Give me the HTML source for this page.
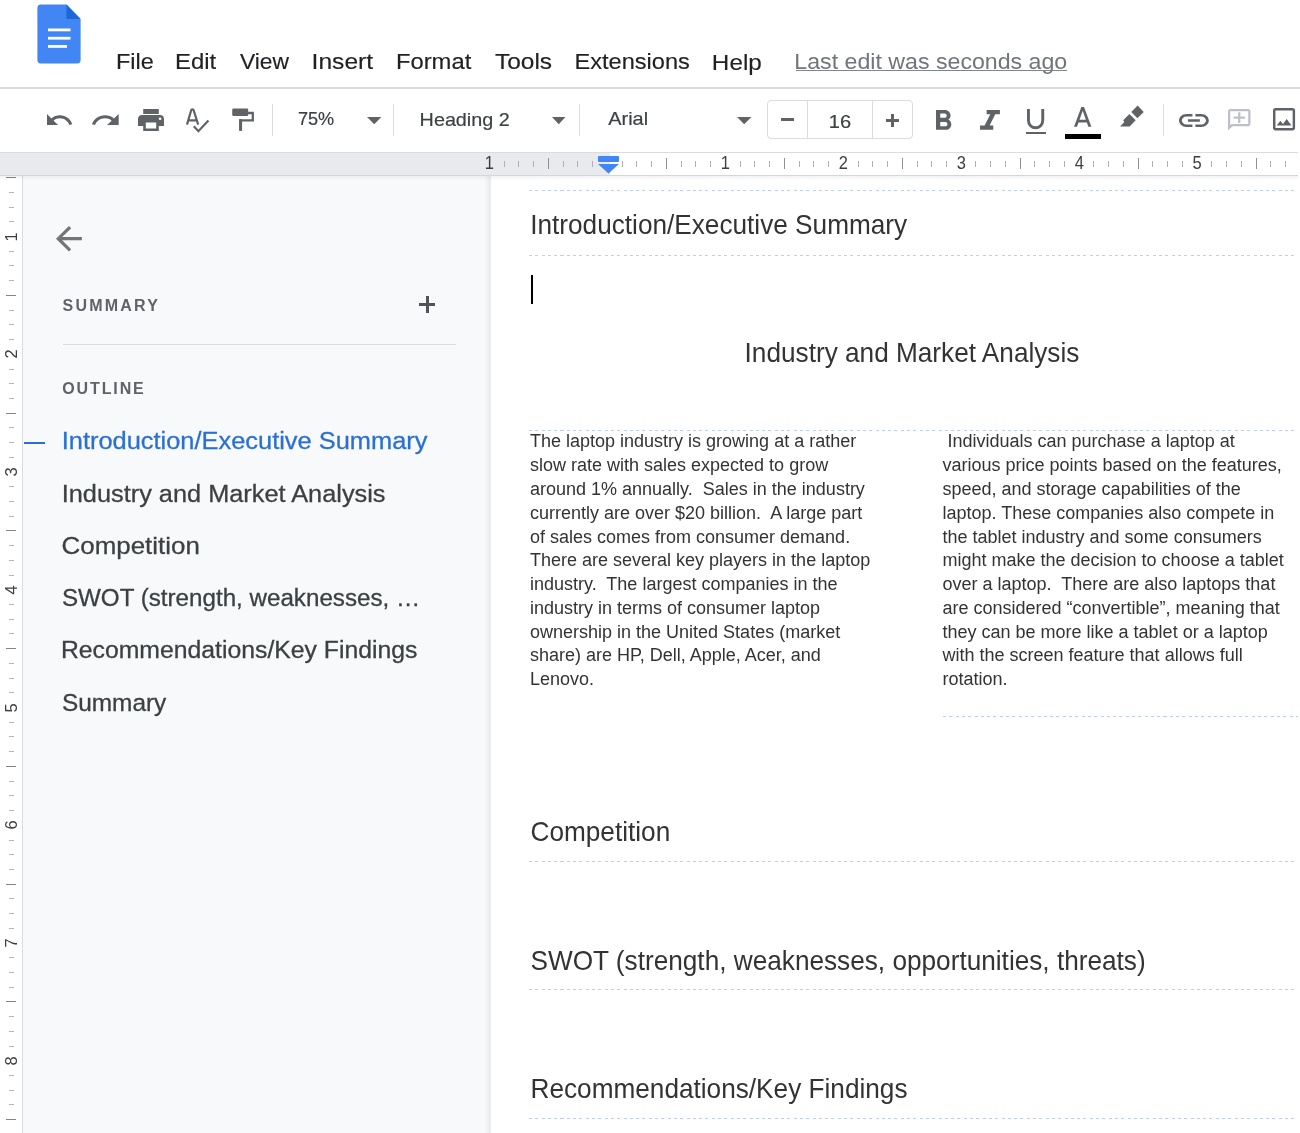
<!DOCTYPE html>
<html><head><meta charset="utf-8"><style>
html,body{margin:0;padding:0;width:1300px;height:1133px;overflow:hidden;background:#fff}
body{position:relative;font-family:"Liberation Sans",sans-serif}
.t{position:absolute;white-space:pre;font-family:"Liberation Sans",sans-serif}
.r{position:absolute;box-sizing:border-box}
.ic{position:absolute;overflow:visible}
</style></head><body><div id="root" style="position:absolute;left:0;top:0;width:1300px;height:1133px;will-change:transform;background:#fff">
<svg class="ic" style="left:37px;top:4px;width:44px;height:60px" viewBox="0 0 44 60">
<path d="M4 0.6 H29.5 L43.6 15 V56 Q43.6 59.6 40 59.6 H4 Q0.4 59.6 0.4 56 V4 Q0.4 0.6 4 0.6Z" fill="#4285f4"/>
<path d="M29.5 0.6 L43.6 15 H29.5Z" fill="#1f66d6"/>
<rect x="11" y="24.5" width="22.5" height="2.8" fill="#fff"/>
<rect x="11" y="32.8" width="22.5" height="2.8" fill="#fff"/>
<rect x="11" y="41" width="19" height="2.8" fill="#fff"/>
</svg>
<div class="t" style="left:115.92px;top:47.28px;font-size:23.476px;line-height:28.17px;color:#202124;font-weight:normal;transform:scaleY(0.9260);transform-origin:0 22.22px;-webkit-text-stroke:0.15px #202124">File</div>
<div class="t" style="left:174.98px;top:46.83px;font-size:23.947px;line-height:28.74px;color:#202124;font-weight:normal;transform:scaleY(0.9078);transform-origin:0 22.67px;-webkit-text-stroke:0.15px #202124">Edit</div>
<div class="t" style="left:240.00px;top:47.91px;font-size:22.807px;line-height:27.37px;color:#202124;font-weight:normal;transform:scaleY(0.9532);transform-origin:0 21.59px;-webkit-text-stroke:0.15px #202124">View</div>
<div class="t" style="left:311.58px;top:46.20px;font-size:24.615px;line-height:29.54px;color:#202124;font-weight:normal;transform:scaleY(0.8832);transform-origin:0 23.30px;-webkit-text-stroke:0.15px #202124">Insert</div>
<div class="t" style="left:395.89px;top:46.94px;font-size:23.825px;line-height:28.59px;color:#202124;font-weight:normal;transform:scaleY(0.9124);transform-origin:0 22.56px;-webkit-text-stroke:0.15px #202124">Format</div>
<div class="t" style="left:494.91px;top:46.29px;font-size:24.513px;line-height:29.42px;color:#202124;font-weight:normal;transform:scaleY(0.8868);transform-origin:0 23.21px;-webkit-text-stroke:0.15px #202124">Tools</div>
<div class="t" style="left:574.41px;top:47.15px;font-size:23.611px;line-height:28.33px;color:#202124;font-weight:normal;transform:scaleY(0.9207);transform-origin:0 22.35px;-webkit-text-stroke:0.15px #202124">Extensions</div>
<div class="t" style="left:711.86px;top:46.52px;font-size:24.272px;line-height:29.13px;color:#202124;font-weight:normal;transform:scaleY(0.8956);transform-origin:0 22.98px;-webkit-text-stroke:0.15px #202124">Help</div>
<div class="t" style="left:794.35px;top:48.46px;font-size:23.173px;line-height:27.81px;color:#70757a;font-weight:normal;transform:scaleY(0.9381);transform-origin:0 21.94px;-webkit-text-stroke:0px #70757a">Last edit was seconds ago</div>
<div class="r" style="left:796px;top:69.6px;width:271px;height:1.3px;background:#80868b"></div>
<div class="r" style="left:0;top:87px;width:1300px;height:1.5px;background:#dadce0"></div>
<svg class="ic" style="left:46.6px;top:113.5px;width:25.300000000000004px;height:11.099999999999994px" viewBox="2 7 20.5 9" preserveAspectRatio="none"><path fill="#5f6368" d="M12.5 8c-2.65 0-5.05.99-6.9 2.6L2 7v9h9l-3.62-3.62c1.39-1.16 3.16-1.88 5.12-1.88 3.54 0 6.55 2.31 7.6 5.5l2.37-.78C21.08 11.03 17.15 8 12.5 8z" /></svg>
<svg class="ic" style="left:92.3px;top:113.5px;width:26.700000000000003px;height:11.099999999999994px" viewBox="1.54 7 20.46 9" preserveAspectRatio="none"><path fill="#5f6368" d="M18.4 10.6C16.55 8.99 14.15 8 11.5 8c-4.650 0-8.58 3.03-9.96 7.22L3.9 16c1.05-3.19 4.05-5.5 7.6-5.5 1.95 0 3.73.72 5.12 1.88L13 16h9V7l-3.6 3.6z" /></svg>
<svg class="ic" style="left:138px;top:108.5px;width:26px;height:22.0px" viewBox="2 3 20 18" preserveAspectRatio="none"><path fill="#5f6368" d="M19 8H5c-1.66 0-3 1.34-3 3v6h4v4h12v-4h4v-6c0-1.66-1.34-3-3-3zm-3 11H8v-5h8v5zm3-7c-.55 0-1-.45-1-1s.45-1 1-1 1 .45 1 1-.45 1-1 1zm-1-9H6v4h12V3z" /></svg>
<svg class="ic" style="left:175px;top:100px;width:40px;height:40px" viewBox="175 100 40 40"><path d="M187 124.6 L191.2 110.2 Q192.4 108.6 193.6 110.2 L198.2 124.6 M188.6 120.3 H196.6" stroke="#5f6368" stroke-width="2.2" fill="none" stroke-linejoin="round"/><path d="M193.8 126.3 L198.4 131.2 L208.4 120.6" stroke="#5f6368" stroke-width="2.2" fill="none"/></svg>
<svg class="ic" style="left:225px;top:100px;width:40px;height:40px" viewBox="225 100 40 40"><rect x="232.2" y="108.5" width="16" height="7.4" rx="1.2" fill="#5f6368"/><path d="M248 113 H252.8 V120.3 H240.6 V130.7" stroke="#5f6368" stroke-width="2.3" fill="none"/><rect x="239.1" y="119.2" width="3" height="11.5" fill="#5f6368"/></svg>
<div class="r" style="left:271.8px;top:104px;width:1px;height:32px;background:#dadce0"></div>
<div class="r" style="left:393.0px;top:104px;width:1px;height:32px;background:#dadce0"></div>
<div class="r" style="left:578.7px;top:104px;width:1px;height:32px;background:#dadce0"></div>
<div class="r" style="left:1163.3px;top:104px;width:1px;height:32px;background:#dadce0"></div>
<svg class="ic" style="left:366.5px;top:117.3px;width:14.399999999999977px;height:7.200000000000003px" viewBox="7 10 10 5" preserveAspectRatio="none"><path fill="#5f6368" d="M7 10l5 5 5-5z" /></svg>
<svg class="ic" style="left:551.5px;top:117.3px;width:13.5px;height:7.200000000000003px" viewBox="7 10 10 5" preserveAspectRatio="none"><path fill="#5f6368" d="M7 10l5 5 5-5z" /></svg>
<svg class="ic" style="left:737.4px;top:117.3px;width:14.399999999999977px;height:7.200000000000003px" viewBox="7 10 10 5" preserveAspectRatio="none"><path fill="#5f6368" d="M7 10l5 5 5-5z" /></svg>
<div class="t" style="left:297.89px;top:109.06px;font-size:18.103px;line-height:21.72px;color:#3c4043;font-weight:normal;transform:scaleY(1.0087);transform-origin:0 17.14px;-webkit-text-stroke:0.2px #3c4043">75%</div>
<div class="t" style="left:419.62px;top:107.57px;font-size:19.784px;line-height:23.74px;color:#3c4043;font-weight:normal;transform:scaleY(0.9230);transform-origin:0 18.73px;-webkit-text-stroke:0.2px #3c4043">Heading 2</div>
<div class="t" style="left:608.20px;top:107.40px;font-size:19.966px;line-height:23.96px;color:#3c4043;font-weight:normal;transform:scaleY(0.9146);transform-origin:0 18.90px;-webkit-text-stroke:0.2px #3c4043">Arial</div>
<div class="r" style="left:767.3px;top:99.8px;width:145.6px;height:39px;border:1px solid #dadce0;border-radius:4px"></div>
<div class="r" style="left:806.5px;top:100px;width:1px;height:38.6px;background:#dadce0"></div>
<div class="r" style="left:872px;top:100px;width:1px;height:38.6px;background:#dadce0"></div>
<div class="r" style="left:781px;top:118px;width:13.2px;height:3px;background:#5f6368"></div>
<div class="r" style="left:886px;top:119px;width:13.4px;height:2.9px;background:#5f6368"></div>
<div class="r" style="left:891.25px;top:113.8px;width:2.9px;height:13.3px;background:#5f6368"></div>
<div class="t" style="left:828.79px;top:108.69px;font-size:20.076px;line-height:24.09px;color:#3c4043;font-weight:normal;transform:scaleY(0.9096);transform-origin:0 19.01px;-webkit-text-stroke:0.2px #3c4043">16</div>
<svg class="ic" style="left:935.9px;top:110px;width:15.300000000000068px;height:19.80000000000001px" viewBox="7 4 10.75 14" preserveAspectRatio="none"><path fill="#5f6368" d="M15.6 10.79c.97-.67 1.65-1.77 1.65-2.79 0-2.26-1.75-4-4-4H7v14h7.04c2.09 0 3.710-1.7 3.71-3.79 0-1.52-.86-2.82-2.15-3.42zM10 6.5h3c.83 0 1.5.67 1.5 1.5s-.67 1.5-1.5 1.5h-3v-3zm3.5 9H10v-3h3.5c.83 0 1.5.67 1.5 1.5s-.67 1.5-1.5 1.5z" /></svg>
<svg class="ic" style="left:980.3px;top:110px;width:19.90000000000009px;height:19.80000000000001px" viewBox="6 4 12 14" preserveAspectRatio="none"><path fill="#5f6368" d="M10 4v3h2.21l-3.42 8H6v3h8v-3h-2.21l3.42-8H18V4z" /></svg>
<svg class="ic" style="left:1027.2px;top:109.3px;width:17.2px;height:20px" viewBox="0 0 17.2 20"><path d="M1.45 0 V11.6 A7.15 7.15 0 0 0 15.75 11.6 V0" stroke="#5f6368" stroke-width="2.9" fill="none"/></svg>
<div class="r" style="left:1026px;top:131.6px;width:20px;height:2.8px;background:#5f6368"></div>
<svg class="ic" style="left:1073.6px;top:106.9px;width:17.40000000000009px;height:19.799999999999997px" viewBox="5.5 2 13 14" preserveAspectRatio="none"><path fill="#5f6368" d="M11 2L5.5 16h2.25l1.12-3h6.25l1.12 3h2.25L13 2h-2zm-1.38 9L12 4.67 14.38 11H9.62z" /></svg>
<div class="r" style="left:1064.5px;top:133.8px;width:36.7px;height:5px;background:#000"></div>
<svg class="ic" style="left:1110px;top:100px;width:40px;height:32px" viewBox="1110 100 40 32"><path fill="#5f6368" d="M1137.6 105.6 L1143.8 111.9 L1137.4 118.2 L1131.3 112.1Z M1129.4 114.1 L1135.7 120.3 L1129.6 126.4 L1120.1 126.5 L1124.3 122.1 L1123.2 120.3Z"/></svg>
<svg class="ic" style="left:1179.2px;top:113.6px;width:29.799999999999955px;height:12.900000000000006px" viewBox="2 7 20 10" preserveAspectRatio="none"><path fill="#5f6368" d="M3.9 12c0-1.71 1.39-3.1 3.1-3.1h4V7H7c-2.76 0-5 2.24-5 5s2.24 5 5 5h4v-1.9H7c-1.71 0-3.1-1.39-3.1-3.1zM8 13h8v-2H8v2zm9-6h-4v1.9h4c1.71 0 3.1 1.39 3.1 3.1s-1.39 3.1-3.1 3.1h-4V17h4c2.76 0 5-2.24 5-5s-2.24-5-5-5z" /></svg>
<svg class="ic" style="left:1228px;top:108.8px;width:22.5px;height:21.500000000000014px" viewBox="2 2 20 20" preserveAspectRatio="none"><path fill="#bdc1c6" d="M22 4c0-1.1-.9-2-2-2H4c-1.1 0-1.99.9-1.99 2L2 22l4-4h14c1.1 0 2-.9 2-2V4zm-2 12H5.17L4 17.17V4h16v12zM11 5h2v4h4v2h-4v4h-2v-4H7V9h4z" /></svg>
<svg class="ic" style="left:1272.5px;top:107.9px;width:22.09999999999991px;height:22.599999999999994px" viewBox="3 3 18 18" preserveAspectRatio="none"><path fill="#5f6368" d="M19 5v14H5V5h14m0-2H5c-1.1 0-2 .9-2 2v14c0 1.1.9 2 2 2h14c1.1 0 2-.9 2-2V5c0-1.1-.9-2-2-2zm-4.86 8.86l-3 3.87L9 13.14 6 17h12l-3.86-5.14z" /></svg>
<div class="r" style="left:0;top:151.5px;width:1300px;height:1px;background:#dadce0"></div>
<div class="r" style="left:0;top:152.5px;width:1300px;height:22.5px;background:#e8eaed"></div>
<div class="r" style="left:610px;top:152.5px;width:690px;height:22.5px;background:#fff"></div>
<div class="r" style="left:0;top:174.5px;width:1300px;height:1.5px;background:#d3d6da"></div>
<div class="t" style="left:479.32px;top:153.3px;width:20px;text-align:center;font-size:16.5px;line-height:20px;color:#3c4043;transform:scaleY(1.08)">1</div>
<div class="r" style="left:503.57px;top:161px;width:1px;height:5.5px;background:#aeb2b6"></div>
<div class="r" style="left:518.31px;top:161px;width:1px;height:5.5px;background:#aeb2b6"></div>
<div class="r" style="left:533.06px;top:161px;width:1px;height:5.5px;background:#aeb2b6"></div>
<div class="r" style="left:547.81px;top:157.5px;width:1px;height:11.8px;background:#8d9196"></div>
<div class="r" style="left:562.56px;top:161px;width:1px;height:5.5px;background:#aeb2b6"></div>
<div class="r" style="left:577.30px;top:161px;width:1px;height:5.5px;background:#aeb2b6"></div>
<div class="r" style="left:592.05px;top:161px;width:1px;height:5.5px;background:#aeb2b6"></div>
<div class="r" style="left:621.55px;top:161px;width:1px;height:5.5px;background:#aeb2b6"></div>
<div class="r" style="left:636.29px;top:161px;width:1px;height:5.5px;background:#aeb2b6"></div>
<div class="r" style="left:651.04px;top:161px;width:1px;height:5.5px;background:#aeb2b6"></div>
<div class="r" style="left:665.79px;top:157.5px;width:1px;height:11.8px;background:#8d9196"></div>
<div class="r" style="left:680.54px;top:161px;width:1px;height:5.5px;background:#aeb2b6"></div>
<div class="r" style="left:695.28px;top:161px;width:1px;height:5.5px;background:#aeb2b6"></div>
<div class="r" style="left:710.03px;top:161px;width:1px;height:5.5px;background:#aeb2b6"></div>
<div class="t" style="left:715.28px;top:153.3px;width:20px;text-align:center;font-size:16.5px;line-height:20px;color:#3c4043;transform:scaleY(1.08)">1</div>
<div class="r" style="left:739.53px;top:161px;width:1px;height:5.5px;background:#aeb2b6"></div>
<div class="r" style="left:754.27px;top:161px;width:1px;height:5.5px;background:#aeb2b6"></div>
<div class="r" style="left:769.02px;top:161px;width:1px;height:5.5px;background:#aeb2b6"></div>
<div class="r" style="left:783.77px;top:157.5px;width:1px;height:11.8px;background:#8d9196"></div>
<div class="r" style="left:798.52px;top:161px;width:1px;height:5.5px;background:#aeb2b6"></div>
<div class="r" style="left:813.26px;top:161px;width:1px;height:5.5px;background:#aeb2b6"></div>
<div class="r" style="left:828.01px;top:161px;width:1px;height:5.5px;background:#aeb2b6"></div>
<div class="t" style="left:833.26px;top:153.3px;width:20px;text-align:center;font-size:16.5px;line-height:20px;color:#3c4043;transform:scaleY(1.08)">2</div>
<div class="r" style="left:857.51px;top:161px;width:1px;height:5.5px;background:#aeb2b6"></div>
<div class="r" style="left:872.25px;top:161px;width:1px;height:5.5px;background:#aeb2b6"></div>
<div class="r" style="left:887.00px;top:161px;width:1px;height:5.5px;background:#aeb2b6"></div>
<div class="r" style="left:901.75px;top:157.5px;width:1px;height:11.8px;background:#8d9196"></div>
<div class="r" style="left:916.50px;top:161px;width:1px;height:5.5px;background:#aeb2b6"></div>
<div class="r" style="left:931.24px;top:161px;width:1px;height:5.5px;background:#aeb2b6"></div>
<div class="r" style="left:945.99px;top:161px;width:1px;height:5.5px;background:#aeb2b6"></div>
<div class="t" style="left:951.24px;top:153.3px;width:20px;text-align:center;font-size:16.5px;line-height:20px;color:#3c4043;transform:scaleY(1.08)">3</div>
<div class="r" style="left:975.49px;top:161px;width:1px;height:5.5px;background:#aeb2b6"></div>
<div class="r" style="left:990.23px;top:161px;width:1px;height:5.5px;background:#aeb2b6"></div>
<div class="r" style="left:1004.98px;top:161px;width:1px;height:5.5px;background:#aeb2b6"></div>
<div class="r" style="left:1019.73px;top:157.5px;width:1px;height:11.8px;background:#8d9196"></div>
<div class="r" style="left:1034.48px;top:161px;width:1px;height:5.5px;background:#aeb2b6"></div>
<div class="r" style="left:1049.22px;top:161px;width:1px;height:5.5px;background:#aeb2b6"></div>
<div class="r" style="left:1063.97px;top:161px;width:1px;height:5.5px;background:#aeb2b6"></div>
<div class="t" style="left:1069.22px;top:153.3px;width:20px;text-align:center;font-size:16.5px;line-height:20px;color:#3c4043;transform:scaleY(1.08)">4</div>
<div class="r" style="left:1093.47px;top:161px;width:1px;height:5.5px;background:#aeb2b6"></div>
<div class="r" style="left:1108.21px;top:161px;width:1px;height:5.5px;background:#aeb2b6"></div>
<div class="r" style="left:1122.96px;top:161px;width:1px;height:5.5px;background:#aeb2b6"></div>
<div class="r" style="left:1137.71px;top:157.5px;width:1px;height:11.8px;background:#8d9196"></div>
<div class="r" style="left:1152.46px;top:161px;width:1px;height:5.5px;background:#aeb2b6"></div>
<div class="r" style="left:1167.20px;top:161px;width:1px;height:5.5px;background:#aeb2b6"></div>
<div class="r" style="left:1181.95px;top:161px;width:1px;height:5.5px;background:#aeb2b6"></div>
<div class="t" style="left:1187.20px;top:153.3px;width:20px;text-align:center;font-size:16.5px;line-height:20px;color:#3c4043;transform:scaleY(1.08)">5</div>
<div class="r" style="left:1211.45px;top:161px;width:1px;height:5.5px;background:#aeb2b6"></div>
<div class="r" style="left:1226.19px;top:161px;width:1px;height:5.5px;background:#aeb2b6"></div>
<div class="r" style="left:1240.94px;top:161px;width:1px;height:5.5px;background:#aeb2b6"></div>
<div class="r" style="left:1255.69px;top:157.5px;width:1px;height:11.8px;background:#8d9196"></div>
<div class="r" style="left:1270.44px;top:161px;width:1px;height:5.5px;background:#aeb2b6"></div>
<div class="r" style="left:1285.18px;top:161px;width:1px;height:5.5px;background:#aeb2b6"></div>
<div class="r" style="left:597.5px;top:155.6px;width:21px;height:6px;background:#4285f4;border-radius:1px"></div>
<svg class="ic" style="left:597.5px;top:163.5px;width:21px;height:9.5px" viewBox="0 0 21 9.5"><path d="M0 0H21L10.5 9.5Z" fill="#4285f4"/></svg>
<div class="r" style="left:0;top:176px;width:22px;height:957px;background:#fff"></div>
<div class="r" style="left:22px;top:176px;width:1px;height:957px;background:#dadce0"></div>
<div class="r" style="left:5.5px;top:177.18px;width:10.5px;height:1px;background:#80868b"></div>
<div class="r" style="left:8.5px;top:191.89px;width:5.5px;height:1px;background:#b4b8bc"></div>
<div class="r" style="left:8.5px;top:206.61px;width:5.5px;height:1px;background:#b4b8bc"></div>
<div class="r" style="left:8.5px;top:221.33px;width:5.5px;height:1px;background:#b4b8bc"></div>
<div class="t" style="left:1px;top:226.55px;width:20px;height:20px;text-align:center;font-size:16.5px;line-height:20px;color:#3c4043;transform:rotate(-90deg)">1</div>
<div class="r" style="left:8.5px;top:250.77px;width:5.5px;height:1px;background:#b4b8bc"></div>
<div class="r" style="left:8.5px;top:265.49px;width:5.5px;height:1px;background:#b4b8bc"></div>
<div class="r" style="left:8.5px;top:280.21px;width:5.5px;height:1px;background:#b4b8bc"></div>
<div class="r" style="left:5.5px;top:294.93px;width:10.5px;height:1px;background:#80868b"></div>
<div class="r" style="left:8.5px;top:309.64px;width:5.5px;height:1px;background:#b4b8bc"></div>
<div class="r" style="left:8.5px;top:324.36px;width:5.5px;height:1px;background:#b4b8bc"></div>
<div class="r" style="left:8.5px;top:339.08px;width:5.5px;height:1px;background:#b4b8bc"></div>
<div class="t" style="left:1px;top:344.30px;width:20px;height:20px;text-align:center;font-size:16.5px;line-height:20px;color:#3c4043;transform:rotate(-90deg)">2</div>
<div class="r" style="left:8.5px;top:368.52px;width:5.5px;height:1px;background:#b4b8bc"></div>
<div class="r" style="left:8.5px;top:383.24px;width:5.5px;height:1px;background:#b4b8bc"></div>
<div class="r" style="left:8.5px;top:397.96px;width:5.5px;height:1px;background:#b4b8bc"></div>
<div class="r" style="left:5.5px;top:412.68px;width:10.5px;height:1px;background:#80868b"></div>
<div class="r" style="left:8.5px;top:427.39px;width:5.5px;height:1px;background:#b4b8bc"></div>
<div class="r" style="left:8.5px;top:442.11px;width:5.5px;height:1px;background:#b4b8bc"></div>
<div class="r" style="left:8.5px;top:456.83px;width:5.5px;height:1px;background:#b4b8bc"></div>
<div class="t" style="left:1px;top:462.05px;width:20px;height:20px;text-align:center;font-size:16.5px;line-height:20px;color:#3c4043;transform:rotate(-90deg)">3</div>
<div class="r" style="left:8.5px;top:486.27px;width:5.5px;height:1px;background:#b4b8bc"></div>
<div class="r" style="left:8.5px;top:500.99px;width:5.5px;height:1px;background:#b4b8bc"></div>
<div class="r" style="left:8.5px;top:515.71px;width:5.5px;height:1px;background:#b4b8bc"></div>
<div class="r" style="left:5.5px;top:530.42px;width:10.5px;height:1px;background:#80868b"></div>
<div class="r" style="left:8.5px;top:545.14px;width:5.5px;height:1px;background:#b4b8bc"></div>
<div class="r" style="left:8.5px;top:559.86px;width:5.5px;height:1px;background:#b4b8bc"></div>
<div class="r" style="left:8.5px;top:574.58px;width:5.5px;height:1px;background:#b4b8bc"></div>
<div class="t" style="left:1px;top:579.80px;width:20px;height:20px;text-align:center;font-size:16.5px;line-height:20px;color:#3c4043;transform:rotate(-90deg)">4</div>
<div class="r" style="left:8.5px;top:604.02px;width:5.5px;height:1px;background:#b4b8bc"></div>
<div class="r" style="left:8.5px;top:618.74px;width:5.5px;height:1px;background:#b4b8bc"></div>
<div class="r" style="left:8.5px;top:633.46px;width:5.5px;height:1px;background:#b4b8bc"></div>
<div class="r" style="left:5.5px;top:648.17px;width:10.5px;height:1px;background:#80868b"></div>
<div class="r" style="left:8.5px;top:662.89px;width:5.5px;height:1px;background:#b4b8bc"></div>
<div class="r" style="left:8.5px;top:677.61px;width:5.5px;height:1px;background:#b4b8bc"></div>
<div class="r" style="left:8.5px;top:692.33px;width:5.5px;height:1px;background:#b4b8bc"></div>
<div class="t" style="left:1px;top:697.55px;width:20px;height:20px;text-align:center;font-size:16.5px;line-height:20px;color:#3c4043;transform:rotate(-90deg)">5</div>
<div class="r" style="left:8.5px;top:721.77px;width:5.5px;height:1px;background:#b4b8bc"></div>
<div class="r" style="left:8.5px;top:736.49px;width:5.5px;height:1px;background:#b4b8bc"></div>
<div class="r" style="left:8.5px;top:751.21px;width:5.5px;height:1px;background:#b4b8bc"></div>
<div class="r" style="left:5.5px;top:765.92px;width:10.5px;height:1px;background:#80868b"></div>
<div class="r" style="left:8.5px;top:780.64px;width:5.5px;height:1px;background:#b4b8bc"></div>
<div class="r" style="left:8.5px;top:795.36px;width:5.5px;height:1px;background:#b4b8bc"></div>
<div class="r" style="left:8.5px;top:810.08px;width:5.5px;height:1px;background:#b4b8bc"></div>
<div class="t" style="left:1px;top:815.30px;width:20px;height:20px;text-align:center;font-size:16.5px;line-height:20px;color:#3c4043;transform:rotate(-90deg)">6</div>
<div class="r" style="left:8.5px;top:839.52px;width:5.5px;height:1px;background:#b4b8bc"></div>
<div class="r" style="left:8.5px;top:854.24px;width:5.5px;height:1px;background:#b4b8bc"></div>
<div class="r" style="left:8.5px;top:868.96px;width:5.5px;height:1px;background:#b4b8bc"></div>
<div class="r" style="left:5.5px;top:883.67px;width:10.5px;height:1px;background:#80868b"></div>
<div class="r" style="left:8.5px;top:898.39px;width:5.5px;height:1px;background:#b4b8bc"></div>
<div class="r" style="left:8.5px;top:913.11px;width:5.5px;height:1px;background:#b4b8bc"></div>
<div class="r" style="left:8.5px;top:927.83px;width:5.5px;height:1px;background:#b4b8bc"></div>
<div class="t" style="left:1px;top:933.05px;width:20px;height:20px;text-align:center;font-size:16.5px;line-height:20px;color:#3c4043;transform:rotate(-90deg)">7</div>
<div class="r" style="left:8.5px;top:957.27px;width:5.5px;height:1px;background:#b4b8bc"></div>
<div class="r" style="left:8.5px;top:971.99px;width:5.5px;height:1px;background:#b4b8bc"></div>
<div class="r" style="left:8.5px;top:986.71px;width:5.5px;height:1px;background:#b4b8bc"></div>
<div class="r" style="left:5.5px;top:1001.42px;width:10.5px;height:1px;background:#80868b"></div>
<div class="r" style="left:8.5px;top:1016.14px;width:5.5px;height:1px;background:#b4b8bc"></div>
<div class="r" style="left:8.5px;top:1030.86px;width:5.5px;height:1px;background:#b4b8bc"></div>
<div class="r" style="left:8.5px;top:1045.58px;width:5.5px;height:1px;background:#b4b8bc"></div>
<div class="t" style="left:1px;top:1050.80px;width:20px;height:20px;text-align:center;font-size:16.5px;line-height:20px;color:#3c4043;transform:rotate(-90deg)">8</div>
<div class="r" style="left:8.5px;top:1075.02px;width:5.5px;height:1px;background:#b4b8bc"></div>
<div class="r" style="left:8.5px;top:1089.74px;width:5.5px;height:1px;background:#b4b8bc"></div>
<div class="r" style="left:8.5px;top:1104.46px;width:5.5px;height:1px;background:#b4b8bc"></div>
<div class="r" style="left:5.5px;top:1119.17px;width:10.5px;height:1px;background:#80868b"></div>
<div class="r" style="left:23px;top:176px;width:468px;height:957px;background:#f8f9fa"></div>
<div class="r" style="left:484px;top:176px;width:7px;height:957px;background:linear-gradient(to right,rgba(0,0,0,0),rgba(0,0,0,0.065))"></div>
<svg class="ic" style="left:55.9px;top:226.3px;width:25.9px;height:25.4px" viewBox="4 4 16 16" preserveAspectRatio="none"><path fill="#757575" d="M20 11H7.83l5.59-5.59L12 4l-8 8 8 8 1.41-1.41L7.83 13H20v-2z"/></svg>
<div class="t" style="left:62.58px;top:296.25px;font-size:16px;line-height:19.2px;color:#5f6368;font-weight:bold;letter-spacing:2.21px;">SUMMARY</div>
<div class="r" style="left:418.8px;top:303.4px;width:16.7px;height:2.8px;background:#505458"></div>
<div class="r" style="left:425.75px;top:296.2px;width:2.8px;height:17.2px;background:#505458"></div>
<div class="r" style="left:62.5px;top:344px;width:393.5px;height:1.2px;background:#dadce0"></div>
<div class="t" style="left:62.26px;top:379.45px;font-size:16px;line-height:19.2px;color:#5f6368;font-weight:bold;letter-spacing:1.886px;">OUTLINE</div>
<div class="r" style="left:23.5px;top:441.5px;width:21.2px;height:2.8px;background:#2a6fd4"></div>
<div class="t" style="left:61.71px;top:425.24px;font-size:25.418px;line-height:30.5px;color:#2a6fd4;font-weight:normal;transform:scaleY(0.9237);transform-origin:0 24.06px;-webkit-text-stroke:0.3px #2a6fd4">Introduction/Executive Summary</div>
<div class="t" style="left:61.72px;top:478.41px;font-size:25.340px;line-height:30.41px;color:#3c4043;font-weight:normal;transform:scaleY(0.9265);transform-origin:0 23.99px;-webkit-text-stroke:0.3px #3c4043">Industry and Market Analysis</div>
<div class="t" style="left:61.60px;top:529.76px;font-size:25.928px;line-height:31.11px;color:#3c4043;font-weight:normal;transform:scaleY(0.9055);transform-origin:0 24.54px;-webkit-text-stroke:0.3px #3c4043">Competition</div>
<div class="t" style="left:61.93px;top:583.10px;font-size:24.189px;line-height:29.03px;color:#3c4043;font-weight:normal;transform:scaleY(0.9706);transform-origin:0 22.90px;-webkit-text-stroke:0.3px #3c4043">SWOT (strength, weaknesses, …</div>
<div class="t" style="left:60.92px;top:635.34px;font-size:24.780px;line-height:29.74px;color:#3c4043;font-weight:normal;transform:scaleY(0.9475);transform-origin:0 23.46px;-webkit-text-stroke:0.3px #3c4043">Recommendations/Key Findings</div>
<div class="t" style="left:61.92px;top:687.68px;font-size:24.420px;line-height:29.3px;color:#3c4043;font-weight:normal;transform:scaleY(0.9614);transform-origin:0 23.12px;-webkit-text-stroke:0.3px #3c4043">Summary</div>
<div class="r" style="left:491px;top:176px;width:809px;height:957px;background:#fff"></div>
<div class="r" style="left:0;top:176px;width:1300px;height:4px;background:linear-gradient(rgba(60,64,67,0.07),rgba(60,64,67,0))"></div>
<div class="r" style="left:529px;top:190.2px;width:771px;height:1px;background:repeating-linear-gradient(to right,#bccff1 0,#bccff1 3px,transparent 3px,transparent 6.3px)"></div>
<div class="t" style="left:530.2px;top:209.60px;font-size:26.2px;line-height:31.44px;color:#333333;font-weight:normal;letter-spacing:0px;transform:scaleY(1.05);transform-origin:0 24.80px;">Introduction/Executive Summary</div>
<div class="r" style="left:529px;top:254.5px;width:771px;height:1px;background:repeating-linear-gradient(to right,#bccff1 0,#bccff1 3px,transparent 3px,transparent 6.3px)"></div>
<div class="r" style="left:530.5px;top:275.3px;width:2.2px;height:29px;background:#000"></div>
<div class="t" style="left:744.6px;top:338.00px;font-size:26.2px;line-height:31.44px;color:#333333;font-weight:normal;letter-spacing:0px;transform:scaleY(1.05);transform-origin:0 24.80px;">Industry and Market Analysis</div>
<div class="r" style="left:529px;top:430.2px;width:771px;height:1px;background:repeating-linear-gradient(to right,#bccff1 0,#bccff1 3px,transparent 3px,transparent 6.3px)"></div>
<div class="t" style="left:530px;top:431.46px;font-size:18px;line-height:21.6px;color:#333;font-weight:normal;letter-spacing:0px;">The laptop industry is growing at a rather</div>
<div class="t" style="left:530px;top:455.24px;font-size:18px;line-height:21.6px;color:#333;font-weight:normal;letter-spacing:0px;">slow rate with sales expected to grow</div>
<div class="t" style="left:530px;top:479.02px;font-size:18px;line-height:21.6px;color:#333;font-weight:normal;letter-spacing:0px;">around 1% annually.&nbsp; Sales in the industry</div>
<div class="t" style="left:530px;top:502.80px;font-size:18px;line-height:21.6px;color:#333;font-weight:normal;letter-spacing:0px;">currently are over $20 billion.&nbsp; A large part</div>
<div class="t" style="left:530px;top:526.58px;font-size:18px;line-height:21.6px;color:#333;font-weight:normal;letter-spacing:0px;">of sales comes from consumer demand.&nbsp;</div>
<div class="t" style="left:530px;top:550.36px;font-size:18px;line-height:21.6px;color:#333;font-weight:normal;letter-spacing:0px;">There are several key players in the laptop</div>
<div class="t" style="left:530px;top:574.14px;font-size:18px;line-height:21.6px;color:#333;font-weight:normal;letter-spacing:0px;">industry.&nbsp; The largest companies in the</div>
<div class="t" style="left:530px;top:597.92px;font-size:18px;line-height:21.6px;color:#333;font-weight:normal;letter-spacing:0px;">industry in terms of consumer laptop</div>
<div class="t" style="left:530px;top:621.70px;font-size:18px;line-height:21.6px;color:#333;font-weight:normal;letter-spacing:0px;">ownership in the United States (market</div>
<div class="t" style="left:530px;top:645.48px;font-size:18px;line-height:21.6px;color:#333;font-weight:normal;letter-spacing:0px;">share) are HP, Dell, Apple, Acer, and</div>
<div class="t" style="left:530px;top:669.26px;font-size:18px;line-height:21.6px;color:#333;font-weight:normal;letter-spacing:0px;">Lenovo.</div>
<div class="t" style="left:942.5px;top:431.46px;font-size:18px;line-height:21.6px;color:#333;font-weight:normal;letter-spacing:0px;">&nbsp;Individuals can purchase a laptop at</div>
<div class="t" style="left:942.5px;top:455.24px;font-size:18px;line-height:21.6px;color:#333;font-weight:normal;letter-spacing:0px;">various price points based on the features,</div>
<div class="t" style="left:942.5px;top:479.02px;font-size:18px;line-height:21.6px;color:#333;font-weight:normal;letter-spacing:0px;">speed, and storage capabilities of the</div>
<div class="t" style="left:942.5px;top:502.80px;font-size:18px;line-height:21.6px;color:#333;font-weight:normal;letter-spacing:0px;">laptop. These companies also compete in</div>
<div class="t" style="left:942.5px;top:526.58px;font-size:18px;line-height:21.6px;color:#333;font-weight:normal;letter-spacing:0px;">the tablet industry and some consumers</div>
<div class="t" style="left:942.5px;top:550.36px;font-size:18px;line-height:21.6px;color:#333;font-weight:normal;letter-spacing:0px;">might make the decision to choose a tablet</div>
<div class="t" style="left:942.5px;top:574.14px;font-size:18px;line-height:21.6px;color:#333;font-weight:normal;letter-spacing:0px;">over a laptop.&nbsp; There are also laptops that</div>
<div class="t" style="left:942.5px;top:597.92px;font-size:18px;line-height:21.6px;color:#333;font-weight:normal;letter-spacing:0px;">are considered “convertible”, meaning that</div>
<div class="t" style="left:942.5px;top:621.70px;font-size:18px;line-height:21.6px;color:#333;font-weight:normal;letter-spacing:0px;">they can be more like a tablet or a laptop</div>
<div class="t" style="left:942.5px;top:645.48px;font-size:18px;line-height:21.6px;color:#333;font-weight:normal;letter-spacing:0px;">with the screen feature that allows full</div>
<div class="t" style="left:942.5px;top:669.26px;font-size:18px;line-height:21.6px;color:#333;font-weight:normal;letter-spacing:0px;">rotation.</div>
<div class="r" style="left:942.5px;top:715.5px;width:357.5px;height:1px;background:repeating-linear-gradient(to right,#bccff1 0,#bccff1 3px,transparent 3px,transparent 6.3px)"></div>
<div class="t" style="left:530.5px;top:817.00px;font-size:26.2px;line-height:31.44px;color:#333333;font-weight:normal;letter-spacing:0px;transform:scaleY(1.05);transform-origin:0 24.80px;">Competition</div>
<div class="r" style="left:529px;top:860.5px;width:771px;height:1px;background:repeating-linear-gradient(to right,#bccff1 0,#bccff1 3px,transparent 3px,transparent 6.3px)"></div>
<div class="t" style="left:530.5px;top:946.00px;font-size:26.2px;line-height:31.44px;color:#333333;font-weight:normal;letter-spacing:0px;transform:scaleY(1.05);transform-origin:0 24.80px;">SWOT (strength, weaknesses, opportunities, threats)</div>
<div class="r" style="left:529px;top:988.9px;width:771px;height:1px;background:repeating-linear-gradient(to right,#bccff1 0,#bccff1 3px,transparent 3px,transparent 6.3px)"></div>
<div class="t" style="left:530.5px;top:1073.70px;font-size:26.2px;line-height:31.44px;color:#333333;font-weight:normal;letter-spacing:0px;transform:scaleY(1.05);transform-origin:0 24.80px;">Recommendations/Key Findings</div>
<div class="r" style="left:529px;top:1118.3px;width:771px;height:1px;background:repeating-linear-gradient(to right,#bccff1 0,#bccff1 3px,transparent 3px,transparent 6.3px)"></div>
<div class="r" style="left:1298px;top:150px;width:2px;height:983px;background:#fff"></div>
</div></body></html>
